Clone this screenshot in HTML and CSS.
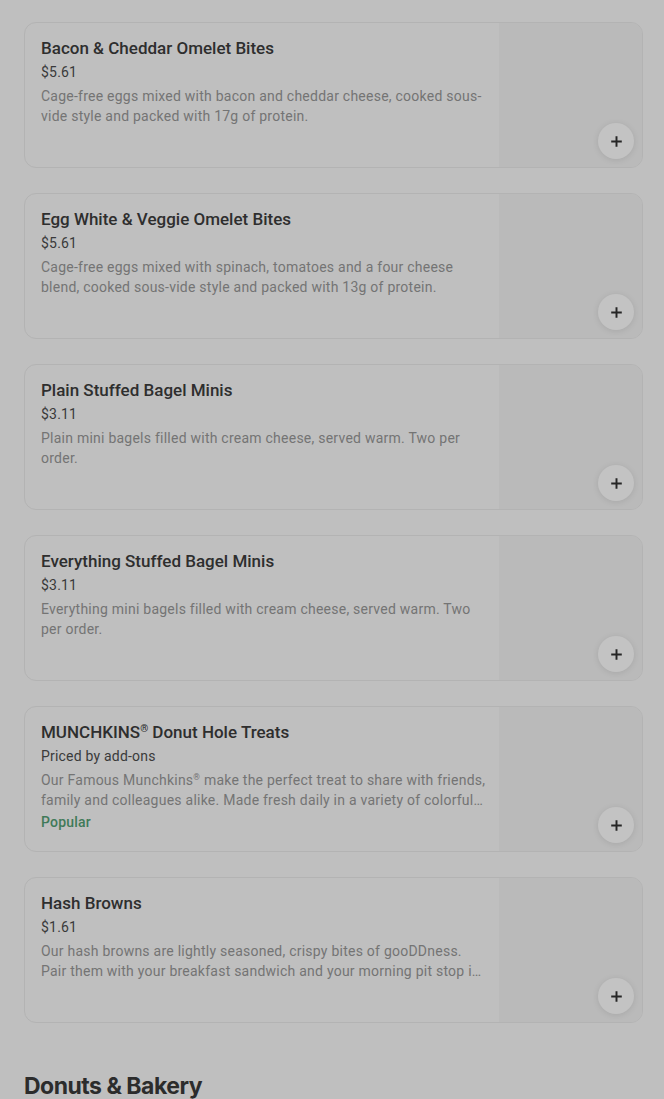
FILE: index.html
```html
<!DOCTYPE html>
<html>
<head>
<meta charset="utf-8">
<link rel="stylesheet" href="styles.css">
</head>
<body>
<main class="menu">
  <ul class="items">
    <li class="card">
      <div class="info">
        <div class="title">Bacon &amp; Cheddar Omelet Bites</div>
        <div class="price">$5.61</div>
        <div class="desc">Cage-free eggs mixed with bacon and cheddar cheese, cooked sous-vide style and packed with 17g of protein.</div>
      </div>
      <div class="thumb"><button class="add" aria-label="Add"><svg viewBox="0 0 16 16" width="13" height="13"><path d="M8 1.5v13M1.5 8h13" stroke="#262626" stroke-width="2.4"/></svg></button></div>
    </li>
    <li class="card">
      <div class="info">
        <div class="title">Egg White &amp; Veggie Omelet Bites</div>
        <div class="price">$5.61</div>
        <div class="desc">Cage-free eggs mixed with spinach, tomatoes and a four cheese blend, cooked sous-vide style and packed with 13g of protein.</div>
      </div>
      <div class="thumb"><button class="add" aria-label="Add"><svg viewBox="0 0 16 16" width="13" height="13"><path d="M8 1.5v13M1.5 8h13" stroke="#262626" stroke-width="2.4"/></svg></button></div>
    </li>
    <li class="card">
      <div class="info">
        <div class="title">Plain Stuffed Bagel Minis</div>
        <div class="price">$3.11</div>
        <div class="desc">Plain mini bagels filled with cream cheese, served warm. Two per order.</div>
      </div>
      <div class="thumb"><button class="add" aria-label="Add"><svg viewBox="0 0 16 16" width="13" height="13"><path d="M8 1.5v13M1.5 8h13" stroke="#262626" stroke-width="2.4"/></svg></button></div>
    </li>
    <li class="card">
      <div class="info">
        <div class="title">Everything Stuffed Bagel Minis</div>
        <div class="price">$3.11</div>
        <div class="desc">Everything mini bagels filled with cream cheese, served warm. Two per order.</div>
      </div>
      <div class="thumb"><button class="add" aria-label="Add"><svg viewBox="0 0 16 16" width="13" height="13"><path d="M8 1.5v13M1.5 8h13" stroke="#262626" stroke-width="2.4"/></svg></button></div>
    </li>
    <li class="card">
      <div class="info">
        <div class="title">MUNCHKINS<span class="reg">®</span> Donut Hole Treats</div>
        <div class="price">Priced by add-ons</div>
        <div class="desc">Our Famous Munchkins<span class="reg">®</span> make the perfect treat to share with friends, family and colleagues alike. Made fresh daily in a variety of colorful flavors, perfect for any occasion or celebration.</div>
        <div class="tag">Popular</div>
      </div>
      <div class="thumb"><button class="add" aria-label="Add"><svg viewBox="0 0 16 16" width="13" height="13"><path d="M8 1.5v13M1.5 8h13" stroke="#262626" stroke-width="2.4"/></svg></button></div>
    </li>
    <li class="card">
      <div class="info">
        <div class="title">Hash Browns</div>
        <div class="price">$1.61</div>
        <div class="desc">Our hash browns are lightly seasoned, crispy bites of gooDDness. Pair them with your breakfast sandwich and your morning pit stop is complete.</div>
      </div>
      <div class="thumb"><button class="add" aria-label="Add"><svg viewBox="0 0 16 16" width="13" height="13"><path d="M8 1.5v13M1.5 8h13" stroke="#262626" stroke-width="2.4"/></svg></button></div>
    </li>
  </ul>
  <h2 class="section">Donuts &amp; Bakery</h2>
</main>
</body>
</html>
```

FILE: styles.css
```css
* { box-sizing: border-box; }
html, body { margin: 0; padding: 0; }
body {
  background: #bfbfbf;
  font-family: Roboto, "Noto Sans", sans-serif;
  color: #2f2f2f;
  overflow: hidden;
}
.menu { padding: 22px 21px 0 24px; }
.items {
  list-style: none;
  margin: 0;
  padding: 0;
  display: flex;
  flex-direction: column;
  gap: 25px;
}
.card {
  display: flex;
  height: 146px;
  border: 1px solid #b3b3b3;
  border-radius: 12px;
  overflow: hidden;
  background: #bfbfbf;
}
.info {
  flex: 1;
  min-width: 0;
  padding: 13px 12px 0 16px;
}
.title {
  font-size: 17px;
  font-weight: 500;
  line-height: 24px;
  color: #2e2e2e;
}
.reg {
  font-size: 0.6em;
  vertical-align: 0.55em;
  line-height: 0;
}
.price {
  margin-top: 2px;
  font-size: 14px;
  line-height: 20px;
  letter-spacing: 0.2px;
  color: #3a3a3a;
}
.desc {
  margin-top: 4px;
  font-size: 14px;
  line-height: 20px;
  letter-spacing: 0.24px;
  color: #747474;
  display: -webkit-box;
  -webkit-line-clamp: 2;
  -webkit-box-orient: vertical;
  overflow: hidden;
}
.tag {
  margin-top: 2px;
  font-size: 14px;
  font-weight: 500;
  line-height: 20px;
  letter-spacing: 0.2px;
  color: #3f7a58;
}
.thumb {
  position: relative;
  flex: 0 0 143px;
  background: #bababa;
}
.add {
  position: absolute;
  right: 8px;
  bottom: 8px;
  width: 36px;
  height: 36px;
  border: 0;
  padding: 0;
  border-radius: 50%;
  background: #c3c3c3;
  box-shadow: 0 1px 6px rgba(0,0,0,0.10);
  display: flex;
  align-items: center;
  justify-content: center;
}
.section {
  margin: 47px 0 0 0;
  font-family: Inter, "Noto Sans", sans-serif;
  font-size: 23px;
  font-weight: 700;
  line-height: 32px;
  letter-spacing: -0.5px;
  color: #2c2c2c;
}
```
